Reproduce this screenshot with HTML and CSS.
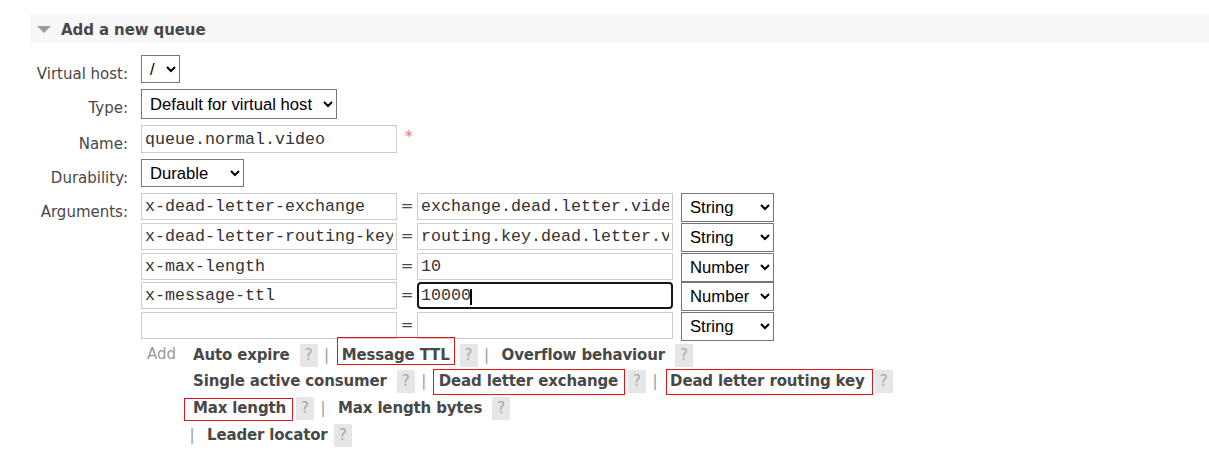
FILE: index.html
```html
<!DOCTYPE html>
<html>
<head>
<meta charset="utf-8">
<title>Add a new queue</title>
<link rel="stylesheet" href="styles.css">
</head>
<body>
<div class="page">
  <div class="section-header"><span class="tri"></span><h2>Add a new queue</h2></div>
  <div class="form">
    <label class="lbl">Virtual host:</label>
    <div class="ctl"><select class="sel sel-vhost"><option>/</option></select></div>

    <label class="lbl">Type:</label>
    <div class="ctl"><select class="sel sel-type"><option>Default for virtual host</option><option>Classic</option><option>Quorum</option><option>Stream</option></select></div>

    <label class="lbl">Name:</label>
    <div class="ctl"><input class="inp name-inp" type="text" value="queue.normal.video"><span class="req">*</span></div>

    <label class="lbl">Durability:</label>
    <div class="ctl"><select class="sel sel-dur"><option>Durable</option><option>Transient</option></select></div>

    <label class="lbl">Arguments:</label>
    <div class="ctl args">
      <div class="arg-row">
        <input class="inp" type="text" value="x-dead-letter-exchange"><span class="eq">=</span><input class="inp" type="text" value="exchange.dead.letter.video"><select class="sel sel-kind"><option>String</option><option>Number</option><option>Boolean</option><option>List</option></select>
      </div>
      <div class="arg-row">
        <input class="inp" type="text" value="x-dead-letter-routing-key"><span class="eq">=</span><input class="inp" type="text" value="routing.key.dead.letter.video"><select class="sel sel-kind"><option>String</option><option>Number</option><option>Boolean</option><option>List</option></select>
      </div>
      <div class="arg-row">
        <input class="inp" type="text" value="x-max-length"><span class="eq">=</span><input class="inp" type="text" value="10"><select class="sel sel-kind"><option>Number</option><option>String</option><option>Boolean</option><option>List</option></select>
      </div>
      <div class="arg-row">
        <input class="inp" type="text" value="x-message-ttl"><span class="eq">=</span><span class="focus-wrap"><input class="inp inp-focus" type="text" value="10000"><span class="caret"></span></span><select class="sel sel-kind"><option>Number</option><option>String</option><option>Boolean</option><option>List</option></select>
      </div>
      <div class="arg-row">
        <input class="inp" type="text" value=""><span class="eq">=</span><input class="inp" type="text" value=""><select class="sel sel-kind"><option>String</option><option>Number</option><option>Boolean</option><option>List</option></select>
      </div>

      <div class="add">
        <div class="add-label">Add</div>
        <div class="add-links">
          <div class="link-row">
            <span class="link">Auto expire</span><span class="help">?</span><span class="sep">|</span><span class="link mark mark-ttl">Message TTL</span><span class="help">?</span><span class="sep">|</span><span class="link">Overflow behaviour</span><span class="help">?</span>
          </div>
          <div class="link-row">
            <span class="link">Single active consumer</span><span class="help">?</span><span class="sep">|</span><span class="link mark mark-dlx">Dead letter exchange</span><span class="help">?</span><span class="sep">|</span><span class="link mark mark-dlk">Dead letter routing key</span><span class="help">?</span>
          </div>
          <div class="link-row">
            <span class="link mark mark-max">Max length</span><span class="help">?</span><span class="sep">|</span><span class="link">Max length bytes</span><span class="help">?</span>
          </div>
          <div class="link-row">
            <span class="sep sep-first">|</span><span class="link">Leader locator</span><span class="help help-tight">?</span>
          </div>
        </div>
      </div>
    </div>
  </div>
</div>
</body>
</html>
```

FILE: styles.css
```css
* {
  box-sizing: border-box;
}

html,
body {
  margin: 0;
  background: #ffffff;
}

body {
  font-family: "DejaVu Sans", Verdana, sans-serif;
  font-size: 15px;
  color: #484848;
}

.page {
  padding: 14px 0 0 30px;
}

.section-header {
  display: flex;
  align-items: center;
  height: 29px;
  background: #f8f8f8;
  padding-left: 7px;
}

.tri {
  width: 0;
  height: 0;
  border-left: 7px solid transparent;
  border-right: 7px solid transparent;
  border-top: 7px solid #9b9b9b;
  margin-right: 10px;
  margin-top: 1px;
}

.section-header h2 {
  margin: 0;
  font-size: 15px;
  font-weight: bold;
  line-height: 29px;
  padding-top: 3px;
  color: #484848;
  letter-spacing: -0.1px;
}

.form {
  display: grid;
  grid-template-columns: 98px auto;
  column-gap: 13px;
  row-gap: 6px;
  margin-top: 12px;
  justify-content: start;
}

.lbl {
  text-align: right;
  padding-top: 10px;
  line-height: 18px;
}

.ctl {
  display: flex;
  align-items: flex-start;
}

.sel {
  font-family: "Liberation Sans", Arial, sans-serif;
  font-size: 16.67px;
  color: #000000;
  height: 28px;
  margin: 0;
  padding: 0 0 0 4px;
  background-color: #ffffff;
}

.sel-vhost {
  width: 39px;
}

.sel-type {
  width: 196px;
  height: 30px;
}

.sel-dur {
  width: 103px;
}

.sel-kind {
  width: 93px;
  height: 29px;
  margin-left: 8px;
}

.inp {
  font-family: "Liberation Mono", "Courier New", monospace;
  font-size: 16.67px;
  color: #333333;
  width: 256px;
  height: 27px;
  margin: 0;
  padding: 0 3px;
  border: 1px solid #cccccc;
  border-radius: 0;
  background: #ffffff;
  outline: none;
}

.name-inp {
  height: 28px;
}

.req {
  color: #f47a7a;
  padding: 3px 0 0 8px;
  line-height: 18px;
}

.args {
  flex-direction: column;
}

.arg-row {
  display: flex;
  align-items: flex-start;
  height: 29.75px;
}

.eq {
  width: 20px;
  text-align: center;
  line-height: 27px;
  color: #484848;
}

.focus-wrap {
  position: relative;
  display: block;
}

.inp-focus {
  border: 2px solid #151515;
  border-radius: 4px;
  padding: 0 2px;
}

.caret {
  position: absolute;
  left: 53px;
  top: 7px;
  width: 2px;
  height: 16px;
  background: #000000;
}

.add {
  display: flex;
  align-items: flex-start;
}

.add-label {
  width: 47px;
  padding-left: 6px;
  padding-top: 2px;
  line-height: 20px;
  color: #9a9a9a;
}

.add-links {
  display: flex;
  flex-direction: column;
}

.link-row {
  display: flex;
  align-items: baseline;
  height: 26.6px;
  line-height: 26px;
  white-space: nowrap;
}

.link {
  position: relative;
  font-weight: bold;
  padding: 0 5px;
  color: #484848;
  letter-spacing: -0.15px;
}

.help {
  display: block;
  width: 18px;
  height: 23px;
  line-height: 23px;
  text-align: center;
  background: #e6e6e6;
  color: #a8a8a8;
  margin-left: 5px;
}

.help-tight {
  margin-left: 1px;
}

.sep {
  display: block;
  width: 8px;
  text-align: center;
  color: #9a9a9a;
  margin: 0 6px 0 5px;
}

.sep-first {
  margin-left: 0;
  margin-right: 6px;
}

.mark::after {
  content: "";
  position: absolute;
  border: 1px solid #e31414;
  left: 0;
  right: 0;
  top: -5px;
  bottom: 3px;
}

.mark-dlx::after {
  top: 1px;
  bottom: -1px;
  left: -1px;
  right: -2px;
}

.mark-dlk::after {
  top: 1px;
  bottom: -1px;
  left: 1px;
  right: -3px;
}

.mark-max::after {
  top: 3px;
  bottom: 0;
  left: -4px;
  right: -2px;
}
```
